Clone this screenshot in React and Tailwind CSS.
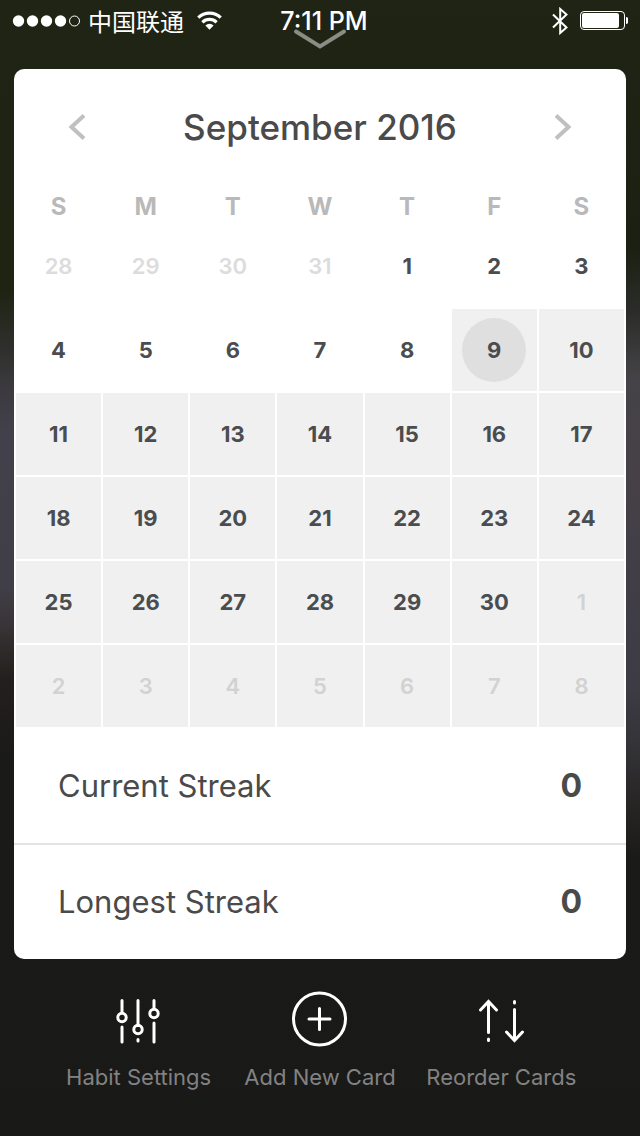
import React from "react";

const WEEKDAYS = [
  ["S", "Sunday"],
  ["M", "Monday"],
  ["T", "Tuesday"],
  ["W", "Wednesday"],
  ["T", "Thursday"],
  ["F", "Friday"],
  ["S", "Saturday"],
];
const TODAY = 12;
const FIRST_OF_MONTH = 4;
const DAYS_IN_MONTH = 30;

// Six weeks beginning on Sunday, August 28.
const WEEKS = Array.from({ length: 6 }, (_, week) =>
  Array.from({ length: 7 }, (_, weekday) => {
    const index = week * 7 + weekday;
    const number = index - FIRST_OF_MONTH + 1;
    const before = number < 1;
    const after = number > DAYS_IN_MONTH;
    return {
      index,
      label: before ? number + 31 : after ? number - DAYS_IN_MONTH : number,
      before,
      after,
      upcoming: index >= TODAY,
      today: index === TODAY,
    };
  })
);

function StatusBar() {
  return (
    <header className="relative grid h-10 grid-cols-3 items-center px-3 pt-0.5 text-white">
      <div className="flex items-center gap-2">
        <svg className="h-3 w-[68px] shrink-0" viewBox="0 0 68 12" fill="#fff" role="img" aria-label="Signal: 4 of 5">
          <circle cx="6.500" cy="6" r="5.7" />
          <circle cx="20.500" cy="6" r="5.7" />
          <circle cx="34.500" cy="6" r="5.7" />
          <circle cx="48.500" cy="6" r="5.7" />
          <circle cx="62.500" cy="6" r="5" fill="none" stroke="#fff" strokeWidth="1" />
        </svg>
        <span className="font-['Noto_Sans_CJK_SC',sans-serif] text-2xl leading-9 font-normal whitespace-nowrap">中国联通</span>
        <svg className="ml-1 h-5 w-[26px] shrink-0" viewBox="0 0 26 20" role="img" aria-label="Wi-Fi">
          <g fill="none" stroke="#fff" strokeWidth="3.2">
            <path d="M2.300 6.700a16 16 0 0 1 22.400 0" />
            <path d="M6.400 11.300a10.200 10.200 0 0 1 14.200 0" />
          </g>
          <path d="M13.500 18.700l-4.100-4.300a6 6 0 0 1 8.200 0z" fill="#fff" />
        </svg>
      </div>
      <time className="pl-2 text-center text-[25px] leading-9 font-medium whitespace-nowrap">7:11 PM</time>
      <div className="flex items-center justify-end gap-3">
        <svg className="h-7 w-4" viewBox="0 0 16 28" fill="none" stroke="#fff" strokeWidth="2" role="img" aria-label="Bluetooth">
          <path d="M1 7.500l13.500 13L8.200 26V2l6.300 5.500L1 20.500" />
        </svg>
        <svg className="h-5 w-12" viewBox="0 0 48 20" role="img" aria-label="Battery">
          <rect x="0.5" y="0.5" width="44" height="18" rx="3.5" fill="none" stroke="#fff" />
          <rect x="2" y="2" width="37" height="15" rx="2" fill="#fff" />
          <path d="M46 6c4 .6 4 6.400 0 7z" fill="#fff" />
        </svg>
      </div>
      <button type="button" aria-label="Close" className="absolute top-7 left-1/2 -translate-x-1/2">
        <svg className="block h-6 w-14" viewBox="0 0 56 24" fill="none" stroke="#8a8d83" strokeWidth="4" strokeLinecap="round">
          <path d="M4 3.500l24 15 24-15" />
        </svg>
      </button>
    </header>
  );
}

function Chevron({ d }) {
  return (
    <svg className="h-7 w-[18px]" viewBox="0 0 18 28" fill="none" stroke="#c0c0c0" strokeWidth="4">
      <path d={d} />
    </svg>
  );
}

function Calendar() {
  return (
    <section>
      <div className="flex h-[116px] items-center justify-between px-11">
        <button type="button" aria-label="Previous month" className="flex h-10 w-10 items-center justify-center">
          <Chevron d="M15 2.500L2.500 14 15 25.500" />
        </button>
        <h1 className="text-[35px] font-medium text-[#4a4a4a]">September 2016</h1>
        <button type="button" aria-label="Next month" className="flex h-10 w-10 items-center justify-center">
          <Chevron d="M3 2.500L15.500 14 3 25.500" />
        </button>
      </div>
      <table className="w-full table-fixed border-separate border-spacing-0.5 text-[22px] leading-7 font-semibold">
        <thead>
          <tr>
            {WEEKDAYS.map(([letter, name]) => (
              <th key={name} scope="col" abbr={name} className="h-9 px-0 pt-1 pb-0 text-2xl font-bold text-[#b9b9b9]">
                {letter}
              </th>
            ))}
          </tr>
        </thead>
        <tbody>
          {WEEKS.map((week) => (
            <tr key={week[0].index}>
              {week.map((day) => (
                <td key={day.index} className={day.upcoming ? "h-[82px] bg-[#f0f0f0] p-0" : "h-[82px] p-0"}>
                  <button
                    type="button"
                    aria-current={day.today ? "date" : undefined}
                    className={[
                      "mx-auto flex h-16 w-16 items-center justify-center rounded-full",
                      day.today ? "bg-[#dfdfdf]" : "",
                      day.before ? "text-[#dcdcdc]" : day.after ? "text-[#d2d2d2]" : "font-bold text-[#4a4d4f]",
                    ].join(" ")}
                  >
                    {day.label}
                  </button>
                </td>
              ))}
            </tr>
          ))}
        </tbody>
      </table>
    </section>
  );
}

function Streak({ label, value }) {
  return (
    <div className="flex items-center justify-between px-11 py-[37px]">
      <dt className="text-[31px] leading-10">{label}</dt>
      <dd className="text-[32px] leading-10 font-bold">{value}</dd>
    </div>
  );
}

function Streaks() {
  return (
    <dl className="divide-y-2 divide-[#e3e3e3] text-[#4a4a4a]">
      <Streak label="Current Streak" value={0} />
      <Streak label="Longest Streak" value={0} />
    </dl>
  );
}

function Action({ label, children }) {
  return (
    <button type="button" className="flex flex-col items-center gap-3 text-[22px] leading-9 whitespace-nowrap text-[#828282]">
      <svg className="h-14 w-14" viewBox="0 0 56 56" fill="none" stroke="#fff" strokeWidth="3" strokeLinecap="round" aria-hidden="true">
        {children}
      </svg>
      {label}
    </button>
  );
}

function ActionBar() {
  return (
    <nav className="grid grid-cols-3 px-12 pt-8">
      <Action label="Habit Settings">
        <path d="M11 9.500v12M11 36v15M27 9.500v25M27 48.500v1.500M43 9.500v8M43 32v19" />
        <circle cx="11" cy="26.5" r="4.2" />
        <circle cx="27" cy="38.500" r="4.2" />
        <circle cx="43" cy="22.500" r="4.2" />
      </Action>
      <Action label="Add New Card">
        <circle cx="27.500" cy="28" r="26" />
        <path d="M27.500 17.500v21M17 28h21" />
      </Action>
      <Action label="Reorder Cards">
        <path d="M15.500 10.500v31M7.500 19l8-8.500 8 8.500M15.500 48v1.500" />
        <path d="M41.500 18.500v31M33.500 41l8 8.500 8-8.500M41.500 10.500v1.500" />
      </Action>
    </nav>
  );
}

export default function App() {
  return (
    <div className="min-h-screen bg-[linear-gradient(to_bottom,#1f2415_0px,#1c2012_250px,#2b2c29_310px,#454347_380px,#474147_470px,#3f3d45_620px,#3d3b43_690px,#353439_740px,#2a2828_790px,#1a1a17_860px,#191917_1136px),linear-gradient(to_bottom,#1f2415_0px,#1f2312_290px,#2f302d_350px,#3c3a3f_390px,#42404a_430px,#403e46_590px,#383437_625px,#231f1c_680px,#1a1a17_760px,#1a1a17_860px,#191917_1136px)] bg-[size:50%_100%,100%_100%] bg-[position:right_top,left_top] bg-no-repeat font-['Inter','Noto_Sans_CJK_SC',sans-serif]">
      <StatusBar />
      <main className="mx-3.5 mt-[29px] overflow-hidden rounded-[10px] bg-white">
        <Calendar />
        <Streaks />
      </main>
      <ActionBar />
    </div>
  );
}
